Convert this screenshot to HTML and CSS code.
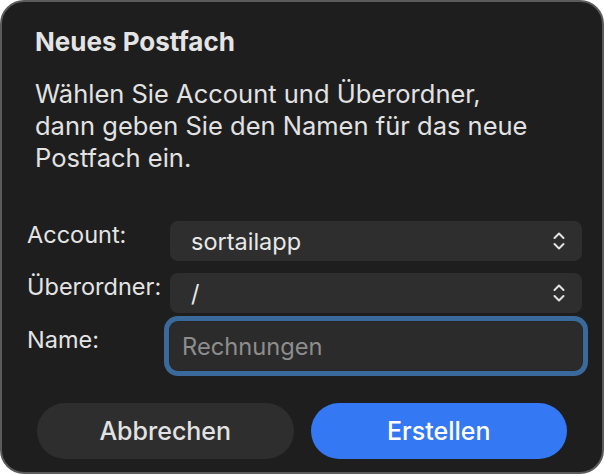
FILE: index.html
```html
<!DOCTYPE html>
<html lang="de">
<head>
<meta charset="utf-8">
<title>Neues Postfach</title>
<link rel="stylesheet" href="styles.css">
</head>
<body>
<div class="window">
  <h1 class="title">Neues Postfach</h1>
  <p class="message">Wählen Sie Account und Überordner,<br>dann geben Sie den Namen für das neue<br>Postfach ein.</p>
  <div class="form">
    <div class="row">
      <span class="label">Account:</span>
      <div class="popup"><span>sortailapp</span>
        <svg class="stepper" width="12" height="20" viewBox="0 0 12 20"><path d="M1.5 7 L6 2.5 L10.5 7 M1.5 13 L6 17.5 L10.5 13" fill="none" stroke="#e2e2e2" stroke-width="2" stroke-linecap="round" stroke-linejoin="round"/></svg>
      </div>
    </div>
    <div class="row">
      <span class="label">Überordner:</span>
      <div class="popup"><span>/</span>
        <svg class="stepper" width="12" height="20" viewBox="0 0 12 20"><path d="M1.5 7 L6 2.5 L10.5 7 M1.5 13 L6 17.5 L10.5 13" fill="none" stroke="#e2e2e2" stroke-width="2" stroke-linecap="round" stroke-linejoin="round"/></svg>
      </div>
    </div>
    <div class="row row-name">
      <span class="label label-name">Name:</span>
      <div class="field"><span class="placeholder">Rechnungen</span></div>
    </div>
  </div>
  <div class="buttons">
    <div class="btn btn-cancel">Abbrechen</div>
    <div class="btn btn-primary">Erstellen</div>
  </div>
</div>
</body>
</html>
```
FILE: styles.css
```css
html, body {
  margin: 0;
  padding: 0;
  background: #ffffff;
}
body {
  font-family: Inter, "Noto Sans", sans-serif;
  color: #e6e6e6;
}
.window {
  box-sizing: border-box;
  width: 604px;
  height: 474px;
  background: #1e1e1e;
  border: 2px solid #5b5b5b;
  border-radius: 24px;
  display: flex;
  flex-direction: column;
}
.title {
  margin: 25px 0 0 33px;
  font-size: 26px;
  line-height: 30px;
  font-weight: 700;
  color: #e4e4e4;
}
.message {
  margin: 21px 0 0 33px;
  font-size: 25.5px;
  line-height: 32px;
  color: #e2e2e2;
}
.form {
  margin: 47px 0 0 25px;
  display: flex;
  flex-direction: column;
}
.row {
  display: flex;
  align-items: flex-start;
}
.row + .row {
  margin-top: 12px;
}
.row-name {
  margin-top: 9px !important;
}
.label {
  width: 143px;
  font-size: 23.5px;
  line-height: 28px;
  color: #e4e4e4;
}
.label-name {
  margin-top: 4px;
}
.popup {
  box-sizing: border-box;
  width: 412px;
  height: 40px;
  background: #2e2e2e;
  border-radius: 8px;
  display: flex;
  align-items: center;
  justify-content: space-between;
  padding: 0 17px 0 21px;
  font-size: 23.5px;
  color: #e8e8e8;
}
.stepper {
  display: block;
}
.field {
  box-sizing: border-box;
  width: 412px;
  height: 48px;
  background: #2b2b2b;
  border-radius: 8px;
  box-shadow: 0 0 0 1px #262626, 0 0 0 6px #3a6a9b;
  display: flex;
  align-items: center;
  padding: 0 12px;
  font-size: 23.7px;
}
.placeholder {
  color: #8d8d8d;
}
.buttons {
  margin-top: auto;
  margin-bottom: 13px;
  padding: 0 35px;
  display: flex;
  gap: 17px;
}
.btn {
  flex: 1;
  height: 56px;
  border-radius: 28px;
  display: flex;
  align-items: center;
  justify-content: center;
  font-size: 25px;
  font-weight: 500;
}
.btn-cancel {
  background: #2e2e2e;
  color: #e2e2e2;
}
.btn-primary {
  background: #3479f3;
  color: #ffffff;
}
```
